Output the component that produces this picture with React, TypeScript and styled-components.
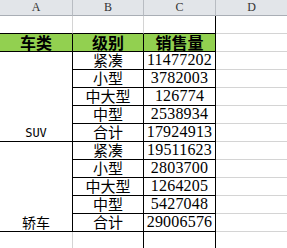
import React from "react";
import styled, { createGlobalStyle } from "styled-components";

const Global = createGlobalStyle`
  html, body { margin: 0; padding: 0; background: #ffffff; }
  body { width: 287px; height: 248px; overflow: hidden; }
`;

const GRID = "#d4d4d4";
const BLACK = "#000000";

const Sheet = styled.div`
  display: grid;
  grid-template-columns: 73px 71px 72px 72px;
  grid-template-rows: 16px repeat(13, 18px);
  width: 287px;
  height: 248px;
  overflow: hidden;
  background: #ffffff;
`;

const ColHead = styled.div`
  box-sizing: border-box;
  display: flex;
  align-items: center;
  justify-content: center;
  background: #e2e5e9;
  border-right: 1px solid #b8bcc2;
  border-bottom: 1px solid #a9aeb5;
  font-family: "Liberation Serif", serif;
  font-size: 12px;
  color: #333333;
`;

const Cell = styled.div<{
  $rb?: boolean;
  $bb?: boolean;
  $fill?: string;
  $span?: number;
}>`
  box-sizing: border-box;
  display: flex;
  justify-content: center;
  align-items: flex-end;
  grid-row: ${(p) => (p.$span ? `span ${p.$span}` : "auto")};
  background: ${(p) => p.$fill || "#ffffff"};
  border-right: 1px solid ${(p) => (p.$rb ? BLACK : GRID)};
  border-bottom: 1px solid ${(p) => (p.$bb ? BLACK : GRID)};
  color: #000000;
  white-space: nowrap;
`;

const FillerCell = styled(Cell)<{ $row: number }>`
  grid-column: 4;
  grid-row: ${(p) => p.$row};
`;

const HeadText = styled.span`
  font-family: "Noto Sans CJK SC", sans-serif;
  font-weight: 700;
  font-size: 16px;
  line-height: 16px;
  padding-bottom: 1px;
`;

const CnText = styled.span<{ $size?: number }>`
  font-family: "Noto Sans CJK SC", sans-serif;
  font-size: ${(p) => p.$size || 15}px;
  line-height: 16px;
  padding-bottom: 1px;
`;

const LatinText = styled.span`
  font-family: "DejaVu Sans Mono", monospace;
  font-size: 12px;
  line-height: 13px;
  padding-bottom: 1px;
`;

const Num = styled.span`
  font-family: "Liberation Serif", serif;
  font-size: 16px;
  line-height: 16px;
  padding-bottom: 1px;
  letter-spacing: 0.2px;
`;

const GREEN = "#92d050";

type Group = { name: string; latin?: boolean; rows: [string, string][] };

const groups: Group[] = [
  {
    name: "SUV",
    latin: true,
    rows: [
      ["紧凑", "11477202"],
      ["小型", "3782003"],
      ["中大型", "126774"],
      ["中型", "2538934"],
      ["合计", "17924913"],
    ],
  },
  {
    name: "轿车",
    rows: [
      ["紧凑", "19511623"],
      ["小型", "2803700"],
      ["中大型", "1264205"],
      ["中型", "5427048"],
      ["合计", "29006576"],
    ],
  },
];

export default function App() {
  const cells: React.ReactNode[] = [];
  groups.forEach((g, gi) => {
    g.rows.forEach(([kind, val], i) => {
      if (i === 0) {
        cells.push(
          <Cell key={`a${gi}`} $span={5} $rb $bb>
            {g.latin ? <LatinText>{g.name}</LatinText> : <CnText $size={14}>{g.name}</CnText>}
          </Cell>
        );
      }
      cells.push(
        <Cell key={`b${gi}${i}`} $rb $bb>
          <CnText>{kind}</CnText>
        </Cell>,
        <Cell key={`c${gi}${i}`} $rb $bb>
          <Num>{val}</Num>
        </Cell>
      );
      if (i === 0) {
        for (let r = 0; r < 5; r++) cells.push(<FillerCell key={`d${gi}${r}`} $row={4 + gi * 5 + r} />);
      }
    });
  });

  return (
    <>
      <Global />
      <Sheet>
        <ColHead>A</ColHead>
        <ColHead>B</ColHead>
        <ColHead>C</ColHead>
        <ColHead>D</ColHead>

        <Cell $bb />
        <Cell $bb />
        <Cell $bb $rb />
        <Cell />

        <Cell $fill={GREEN} $rb $bb>
          <HeadText>车类</HeadText>
        </Cell>
        <Cell $fill={GREEN} $rb $bb>
          <HeadText>级别</HeadText>
        </Cell>
        <Cell $fill={GREEN} $rb $bb>
          <HeadText>销售量</HeadText>
        </Cell>
        <Cell />

        {cells}

        <Cell />
        <Cell $rb />
        <Cell $rb />
        <Cell />
      </Sheet>
    </>
  );
}
